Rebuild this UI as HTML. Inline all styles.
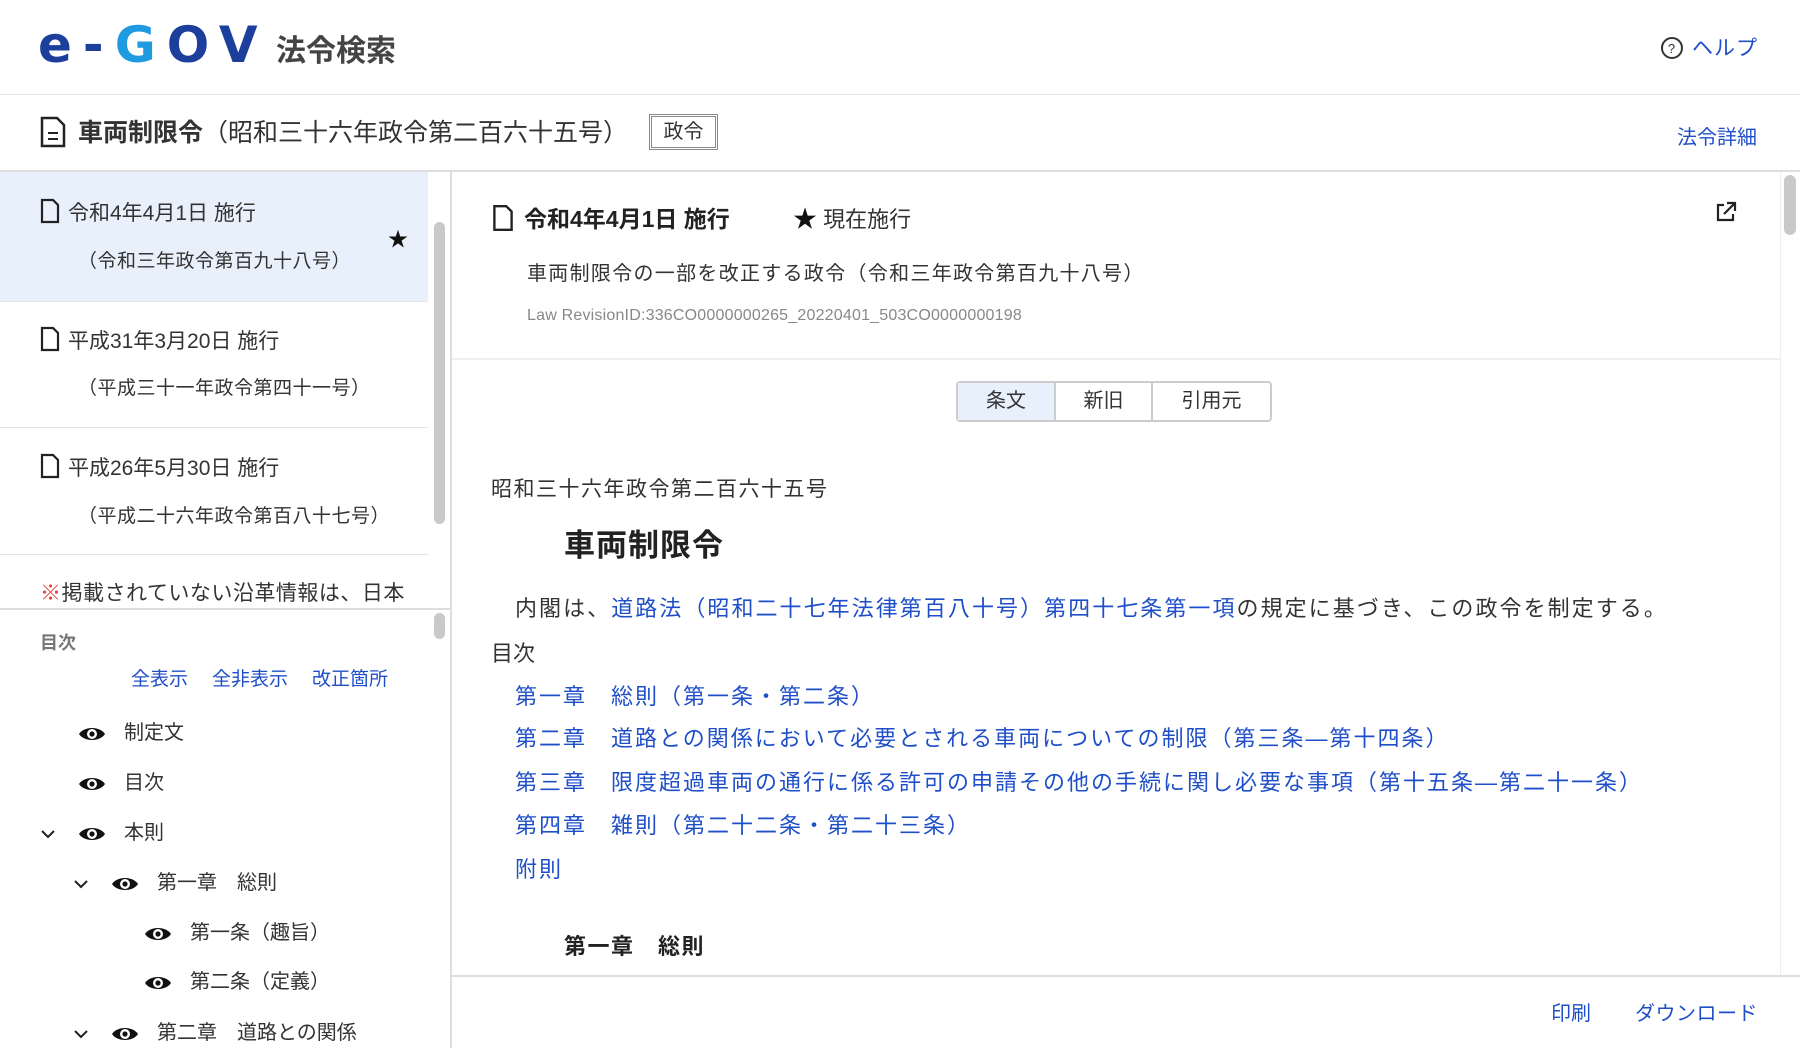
<!DOCTYPE html>
<html><head><meta charset="utf-8"><style>
*{margin:0;padding:0;box-sizing:border-box}
body{width:1800px;height:1048px;overflow:hidden;background:#fff;font-family:"Liberation Sans","Noto Sans CJK JP",sans-serif;color:#333;position:relative}
.a{position:absolute;white-space:nowrap}
.blue{color:#1f4fc8}
.eye{display:inline-block;width:28px;height:16px;vertical-align:middle}
</style></head><body>
<!-- header -->
<div class="a" style="left:38px;top:20px;font-size:50px;font-weight:bold;letter-spacing:11px;font-family:'DejaVu Sans',sans-serif;line-height:50px"><span style="color:#1c3f9e">e</span><span style="color:#1c3f9e">-</span><span style="color:#1e9be0">G</span><span style="color:#1c3f9e">OV</span></div>
<div class="a" style="left:276px;top:26px;font-size:30px;font-weight:bold;color:#444">法令検索</div>
<div class="a blue" style="left:1660px;top:32px;font-size:21px;letter-spacing:1px"><svg width="24" height="24" viewBox="0 0 24 24" style="vertical-align:-5px;margin-right:8px"><circle cx="12" cy="12" r="10" fill="none" stroke="#333" stroke-width="2"/><text x="12" y="17" font-size="13" text-anchor="middle" fill="#333" font-family="Liberation Sans">?</text></svg>ヘルプ</div>
<div class="a" style="left:0;top:94px;width:1800px;height:1px;background:#e6e6e6"></div>
<!-- title bar -->
<svg class="a" style="left:40px;top:116px" width="26" height="32" viewBox="0 0 26 32"><path d="M2 2h15l7 7v21H2z" fill="none" stroke="#222" stroke-width="2.5"/><path d="M8 17h10M8 23h10" stroke="#222" stroke-width="2"/></svg>
<div class="a" style="left:78px;top:113px;font-size:25px;color:#333"><b>車両制限令</b>（昭和三十六年政令第二百六十五号）</div>
<div class="a" style="left:649px;top:114px;width:69px;height:36px;border:3px double #888;font-size:20px;text-align:center;line-height:30px">政令</div>
<div class="a blue" style="left:1677px;top:121px;font-size:20px">法令詳細</div>
<div class="a" style="left:0;top:170px;width:1800px;height:2px;background:#ddd"></div>
<!-- left revisions -->
<div class="a" style="left:0;top:172px;width:428px;height:129px;background:#e8f0fc"></div>
<div class="a" style="left:0;top:301px;width:428px;height:1px;background:#e4e4e4"></div>
<div class="a" style="left:0;top:427px;width:428px;height:1px;background:#e4e4e4"></div>
<div class="a" style="left:0;top:554px;width:428px;height:1px;background:#e4e4e4"></div>
<div class="a" style="left:40px;top:197px;font-size:21px"><svg width="20" height="26" viewBox="0 0 20 26" style="vertical-align:-4px;margin-right:8px"><path d="M2 2h11l5 5v17H2z" fill="none" stroke="#222" stroke-width="2.2"/></svg>令和4年4月1日 施行</div>
<div class="a" style="left:78px;top:246px;font-size:19px;letter-spacing:0.5px">（令和三年政令第百九十八号）</div>
<div class="a" style="left:388px;top:223px;font-size:20px;color:#111">★</div>
<div class="a" style="left:40px;top:325px;font-size:21px"><svg width="20" height="26" viewBox="0 0 20 26" style="vertical-align:-4px;margin-right:8px"><path d="M2 2h11l5 5v17H2z" fill="none" stroke="#222" stroke-width="2.2"/></svg>平成31年3月20日 施行</div>
<div class="a" style="left:78px;top:373px;font-size:19px;letter-spacing:0.5px">（平成三十一年政令第四十一号）</div>
<div class="a" style="left:40px;top:452px;font-size:21px"><svg width="20" height="26" viewBox="0 0 20 26" style="vertical-align:-4px;margin-right:8px"><path d="M2 2h11l5 5v17H2z" fill="none" stroke="#222" stroke-width="2.2"/></svg>平成26年5月30日 施行</div>
<div class="a" style="left:78px;top:501px;font-size:19px;letter-spacing:0.5px">（平成二十六年政令第百八十七号）</div>
<div class="a" style="left:40px;top:577px;font-size:21px;letter-spacing:0.5px"><span style="color:#e23b3b">※</span>掲載されていない沿革情報は、日本</div>
<div class="a" style="left:0;top:608px;width:450px;height:2px;background:#ddd"></div>
<div class="a" style="left:434px;top:222px;width:11px;height:302px;background:#c9c9c9;border-radius:6px"></div>
<div class="a" style="left:434px;top:613px;width:11px;height:26px;background:#c9c9c9;border-radius:6px"></div>
<div class="a" style="left:450px;top:172px;width:2px;height:876px;background:#ddd"></div>
<!-- TOC -->
<div class="a" style="left:40px;top:629px;font-size:18px;color:#777;font-weight:bold">目次</div>
<div class="a blue" style="left:131px;top:664px;font-size:19px"><span>全表示</span><span style="margin-left:24px">全非表示</span><span style="margin-left:24px">改正箇所</span></div>
<svg width="0" height="0" style="position:absolute"><defs><symbol id="e" viewBox="0 0 28 16"><path d="M1 8C6 0 22 0 27 8C22 16 6 16 1 8z" fill="#111"/><circle cx="14" cy="8" r="5" fill="#fff"/><circle cx="14" cy="8" r="2.6" fill="#111"/></symbol><symbol id="c" viewBox="0 0 16 10"><path d="M2 2l6 6 6-6" fill="none" stroke="#222" stroke-width="2"/></symbol></defs></svg>
<div class="a" style="left:78px;top:716px;font-size:20px"><svg class="eye"><use href="#e"/></svg><span style="margin-left:18px">制定文</span></div>
<div class="a" style="left:78px;top:766px;font-size:20px"><svg class="eye"><use href="#e"/></svg><span style="margin-left:18px">目次</span></div>
<div class="a" style="left:40px;top:816px;font-size:20px"><svg width="16" height="10" style="vertical-align:middle;margin-right:22px"><use href="#c"/></svg><svg class="eye"><use href="#e"/></svg><span style="margin-left:18px">本則</span></div>
<div class="a" style="left:73px;top:866px;font-size:20px"><svg width="16" height="10" style="vertical-align:middle;margin-right:22px"><use href="#c"/></svg><svg class="eye"><use href="#e"/></svg><span style="margin-left:18px">第一章　総則</span></div>
<div class="a" style="left:144px;top:916px;font-size:20px"><svg class="eye"><use href="#e"/></svg><span style="margin-left:18px">第一条（趣旨）</span></div>
<div class="a" style="left:144px;top:965px;font-size:20px"><svg class="eye"><use href="#e"/></svg><span style="margin-left:18px">第二条（定義）</span></div>
<div class="a" style="left:73px;top:1016px;font-size:20px"><svg width="16" height="10" style="vertical-align:middle;margin-right:22px"><use href="#c"/></svg><svg class="eye"><use href="#e"/></svg><span style="margin-left:18px">第二章　道路との関係</span></div>
<!-- right header -->
<div class="a" style="left:492px;top:200px;font-size:23px;font-weight:bold;color:#222"><svg width="22" height="28" viewBox="0 0 20 26" style="vertical-align:-5px;margin-right:10px"><path d="M2 2h11l5 5v17H2z" fill="none" stroke="#222" stroke-width="2.2"/></svg>令和4年4月1日 施行</div>
<div class="a" style="left:793px;top:199px;font-size:22px;color:#333"><span style="font-size:24px;color:#111">★</span> 現在施行</div>
<svg class="a" style="left:1715px;top:201px" width="22" height="22" viewBox="0 0 22 22"><path d="M9 4H3v15h15v-6M12 2h8v8M20 2L9 13" fill="none" stroke="#222" stroke-width="2.2"/></svg>
<div class="a" style="left:527px;top:257px;font-size:20px;letter-spacing:1.3px;color:#333">車両制限令の一部を改正する政令（令和三年政令第百九十八号）</div>
<div class="a" style="left:527px;top:307px;font-size:16px;color:#888;letter-spacing:0.2px">Law RevisionID:336CO0000000265_20220401_503CO0000000198</div>
<div class="a" style="left:452px;top:358px;width:1328px;height:2px;background:#eee"></div>
<div class="a" style="left:956px;top:381px;width:316px;height:41px;border:2px solid #ccc;border-radius:4px;display:flex;font-size:20px">
<div style="width:98px;background:#e8f0fc;text-align:center;line-height:37px;border-right:2px solid #ccc">条文</div>
<div style="width:97px;text-align:center;line-height:37px;border-right:2px solid #ccc">新旧</div>
<div style="flex:1;text-align:center;line-height:37px">引用元</div></div>
<!-- body -->
<div class="a" style="left:491px;top:473px;font-size:21px;letter-spacing:1.5px">昭和三十六年政令第二百六十五号</div>
<div class="a" style="left:564px;top:520px;font-size:31px;font-weight:bold;letter-spacing:1px;color:#222">車両制限令</div>
<div class="a" style="left:515px;top:591px;font-size:22px;letter-spacing:2.05px">内閣は、<span class="blue">道路法（昭和二十七年法律第百八十号）第四十七条第一項</span>の規定に基づき、この政令を制定する。</div>
<div class="a" style="left:491px;top:636px;font-size:22px">目次</div>
<div class="a blue" style="left:515px;top:679px;font-size:22px;letter-spacing:2px">第一章　総則（第一条・第二条）</div>
<div class="a blue" style="left:515px;top:721px;font-size:22px;letter-spacing:2px">第二章　道路との関係において必要とされる車両についての制限（第三条―第十四条）</div>
<div class="a blue" style="left:515px;top:765px;font-size:22px;letter-spacing:2px">第三章　限度超過車両の通行に係る許可の申請その他の手続に関し必要な事項（第十五条―第二十一条）</div>
<div class="a blue" style="left:515px;top:808px;font-size:22px;letter-spacing:2px">第四章　雑則（第二十二条・第二十三条）</div>
<div class="a blue" style="left:515px;top:852px;font-size:22px;letter-spacing:2px">附則</div>
<div class="a" style="left:564px;top:929px;font-size:22px;font-weight:bold;color:#222;letter-spacing:1.5px">第一章　総則</div>
<!-- bottom bar -->
<div class="a" style="left:452px;top:975px;width:1348px;height:2px;background:#ddd"></div>
<div class="a blue" style="left:1551px;top:997px;font-size:20px">印刷</div>
<div class="a blue" style="left:1635px;top:997px;font-size:20px;letter-spacing:0.5px">ダウンロード</div>
<!-- right scrollbar -->
<div class="a" style="left:1780px;top:172px;width:1px;height:803px;background:#eee"></div>
<div class="a" style="left:1784px;top:175px;width:12px;height:60px;background:#c9c9c9;border-radius:6px"></div>
</body></html>
